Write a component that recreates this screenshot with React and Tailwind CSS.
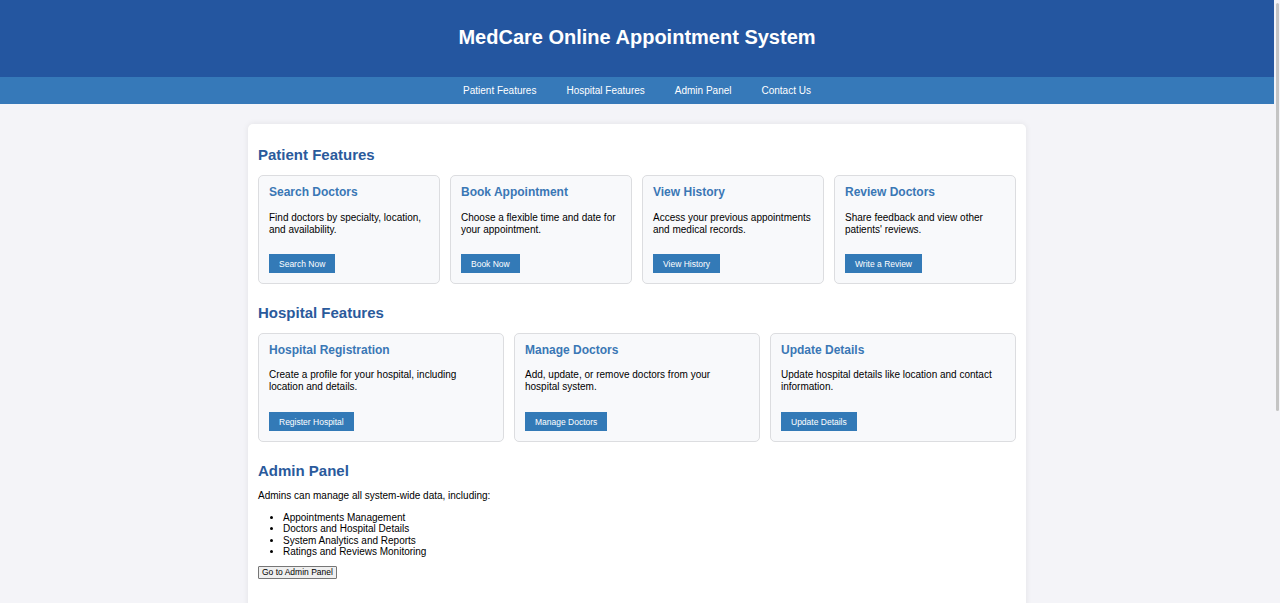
export default function App() {
  const patient = [
    { t: "Search Doctors", d: "Find doctors by specialty, location, and availability.", b: "Search Now" },
    { t: "Book Appointment", d: "Choose a flexible time and date for your appointment.", b: "Book Now" },
    { t: "View History", d: "Access your previous appointments and medical records.", b: "View History" },
    { t: "Review Doctors", d: "Share feedback and view other patients' reviews.", b: "Write a Review" },
  ];
  const hospital = [
    { t: "Hospital Registration", d: "Create a profile for your hospital, including location and details.", b: "Register Hospital" },
    { t: "Manage Doctors", d: "Add, update, or remove doctors from your hospital system.", b: "Manage Doctors" },
    { t: "Update Details", d: "Update hospital details like location and contact information.", b: "Update Details" },
  ];
  const Card = ({ c, narrow }) => (
    <div className="bg-[#f8f9fb] border border-[#dcdde0] rounded-[5px] px-[10px] pt-[9px] pb-[10px] flex flex-col items-start">
      <h3 className="text-[12px] leading-[14px] font-bold text-[#3a77b5]">{c.t}</h3>
      <p className={narrow ? "mt-[12px] pr-[4px] text-[10px] leading-[11.5px] text-black" : "mt-[13px] -mr-[2px] text-[10px] leading-[11.5px] text-black"}>{c.d}</p>
      <button className={narrow ? "mt-[20px] bg-[#337ab7] text-white text-[8.5px] leading-[10px] px-[10px] py-[4.5px]" : "mt-[19px] bg-[#337ab7] text-white text-[8.5px] leading-[10px] px-[10px] py-[4.5px]"}>{c.b}</button>
    </div>
  );
  const H2 = ({ children }) => (
    <h2 className="text-[15px] leading-[17px] font-bold text-[#2a5a9c] mb-[12px]">{children}</h2>
  );
  return (
    <div className="h-[603px] overflow-hidden flex bg-[#f4f4f8]" style={{ fontFamily: '"Liberation Sans", Arial, sans-serif' }}>
      <div className="flex-1 flex flex-col">
        <header className="shrink-0 bg-[#2456a0] h-[77px] flex items-center justify-center">
          <h1 className="text-white text-[20px] font-bold leading-[23px] -mt-[3px]">MedCare Online Appointment System</h1>
        </header>
        <nav className="shrink-0 bg-[#3679b9] h-[27px] flex items-center justify-center gap-[30px] text-white text-[10px]">
          <span>Patient Features</span>
          <span>Hospital Features</span>
          <span>Admin Panel</span>
          <span>Contact Us</span>
        </nav>
        <main className="shrink-0 mt-[20px] mx-auto w-[778px] bg-white rounded-[5px] shadow-[0_0_6px_rgba(0,0,0,0.08)] px-[10px] pt-[22px] pb-[20px]">
          <section>
            <H2>Patient Features</H2>
            <div className="grid grid-cols-4 gap-[10px]">
              {patient.map((c) => <Card key={c.t} c={c} />)}
            </div>
          </section>
          <section className="mt-[20px]">
            <H2>Hospital Features</H2>
            <div className="grid grid-cols-3 gap-[10px]">
              {hospital.map((c) => <Card key={c.t} c={c} narrow />)}
            </div>
          </section>
          <section className="mt-[20px] flex flex-col items-start">
            <H2>Admin Panel</H2>
            <p className="text-[10px] leading-[11.5px] text-black -mt-[1px]">Admins can manage all system-wide data, including:</p>
            <ul className="list-disc pl-[25px] mt-[10px] mb-[8px] text-[10px] leading-[11.5px] text-black">
              <li>Appointments Management</li>
              <li>Doctors and Hospital Details</li>
              <li>System Analytics and Reports</li>
              <li>Ratings and Reviews Monitoring</li>
            </ul>
            <button className="bg-[#efefef] border border-[#767676] rounded-[1px] text-black text-[8.5px] leading-[10px] px-[3px] py-[0.5px]">Go to Admin Panel</button>
          </section>
          <section className="mt-[20px]">
            <H2>Contact Us</H2>
            <p className="text-[10px] leading-[11.5px]">Reach us for support and inquiries.</p>
          </section>
        </main>
      </div>
      <div className="w-[6px] bg-[#f4f4f8] flex flex-col items-end pt-[3px] pr-[1px]">
        <div className="w-[3px] h-[408px] bg-[#c4c4c4] rounded-[2px]"></div>
      </div>
    </div>
  );
}
